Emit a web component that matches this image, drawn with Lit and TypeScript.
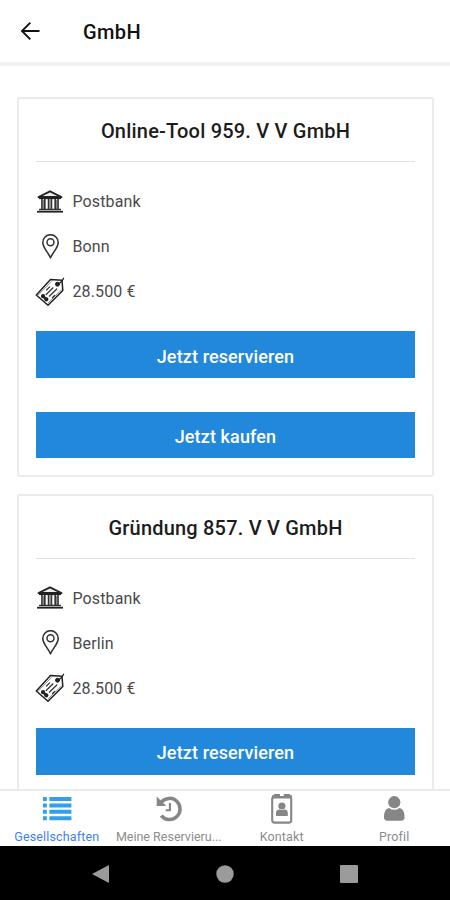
import { LitElement, html, css, svg, nothing } from "lit";
import { customElement, property } from "lit/decorators.js";

const bankIcon = svg`<svg width="28" height="24" viewBox="0 0 28 24">
  <path d="M2.500 7 14 1.300 25.500 7z" fill="#eee" stroke="#222" stroke-width="1.900" stroke-linejoin="round"/>
  <path d="M3 8.300h22" stroke="#222" stroke-width="1.600"/>
  <path d="M6 9v10.500M8.800 9v10.500M12.600 9v10.500M15.400 9v10.500M19.200 9v10.500M22 9v10.500" stroke="#333" stroke-width="1.700"/>
  <path d="M7.400 10v9M14 10v9M20.600 10v9" stroke="#888" stroke-width="1.200"/>
  <path d="M3 19.500h22" stroke="#333" stroke-width="1.500"/>
  <path d="M1 21.700h26" stroke="#222" stroke-width="1.800"/>
</svg>`;

const pinIcon = svg`<svg width="28" height="26" viewBox="0 0 28 26" fill="none" stroke="#333">
  <path d="M14.500 23.800C12.300 18.500 6.800 13.700 6.800 8.400a7.700 7.700 0 0 1 15.400 0c0 5.300-5.500 10.100-7.700 15.400z" stroke-width="1.600" stroke-linejoin="round"/>
  <circle cx="14.500" cy="8.200" r="3.500" stroke-width="1.500"/>
</svg>`;

const tagIcon = svg`<svg width="30" height="30" viewBox="0 0 30 30" fill="none" stroke="#222" stroke-linecap="round" stroke-linejoin="round">
  <path d="M15.500 2.500 27 3.200l.8 10.300L13 28.200 1.300 18z" stroke-width="1.500"/>
  <path d="M3.300 18 16.300 4.700M13 26l13.300-13" stroke="#777" stroke-width=".8"/>
  <path d="M23 6.800c2.500-.6 4.200-2.600 5.600-5.500" stroke-width="1.300"/>
  <circle cx="22.500" cy="7.200" r="2" fill="#222" stroke-width="1"/>
  <path d="m11.500 13 3.200-3.200M11.200 17.500l6.800-6.700M14.300 19.200l7.500-7.200M17.500 20.500l2.200-2.200" stroke="#333" stroke-width="1.200"/>
  <path d="M8 19.200h.1M11.300 22.300h.1" stroke-width="4.200"/>
  <path d="m8 19.200 3.300 3.100" stroke-width="2.500"/>
</svg>`;

const listIcon = svg`<svg width="30" height="24" viewBox="0 0 30 24" fill="#2f9fee">
  <path d="M1 0h3.800v4H1zM7.400 0h22v4h-22zM1 6.400h3.800v4H1zM7.400 6.400h22v4h-22zM1 12.800h3.800v4H1zM7.400 12.800h22v4h-22zM1 19.200h3.800v4H1zM7.400 19.200h22v4h-22z"/>
</svg>`;

const historyIcon = svg`<svg width="28" height="28" viewBox="0 0 28 28" fill="none" stroke="#868686">
  <path d="M6.300 7.200A10.600 10.600 0 1 1 6.200 20.600" stroke-width="3.500"/>
  <path d="M1.700 1.500V11H11.200z" fill="#868686" stroke="none"/>
  <path d="M14.900 8v7.300h-4.200" stroke-width="2.100"/>
</svg>`;

const badgeIcon = svg`<svg width="22" height="30" viewBox="0 0 22 30" fill="#868686">
  <rect x="1.200" y="3" width="19" height="25.600" rx="2" fill="none" stroke="#868686" stroke-width="2.100"/>
  <path d="M1 1.200h1.800V0H9v2.400h3.800V0h6.300v1.200H21v3.200H1z"/>
  <circle cx="10.900" cy="12" r="3.600"/>
  <path d="M5 22v-3.200c0-2.200 1.400-3.400 3.400-3.400a5 5 0 0 0 5 0c2 0 3.400 1.200 3.400 3.400V22z"/>
</svg>`;

const personIcon = svg`<svg width="24" height="28" viewBox="0 0 24 28" fill="#868686">
  <circle cx="12.300" cy="7.200" r="6.100"/>
  <path d="M2 22.500c0-5.200 1.300-8.800 5.200-9.600a8 8 0 0 0 10.200 0c3.900.8 5.200 4.400 5.200 9.600 0 2-1.300 3.200-3.200 3.200H5.200C3.300 25.700 2 24.500 2 22.500z"/>
</svg>`;

@customElement("company-card")
class CompanyCard extends LitElement {
  @property() name = "";
  @property() bank = "";
  @property() city = "";
  @property() price = "";
  @property({ type: Boolean }) buyable = false;

  static styles = css`
    :host {
      display: block;
      box-sizing: border-box;
      height: 380px;
      flex: none;
      padding: 0 17px;
      border: 2px solid #eaecec;
      border-radius: 3px;
      background: #fff;
    }
    h2 {
      margin: 0;
      height: 63px;
      line-height: 64px;
      box-sizing: border-box;
      border-bottom: 1px solid #e2e2e2;
      text-align: center;
      font-size: 20px;
      font-weight: 500;
      letter-spacing: 0.200px;
      color: #1c1c1c;
      white-space: nowrap;
    }
    .facts {
      padding-top: 17px;
      height: 152px;
    }
    .fact {
      display: flex;
      align-items: center;
      height: 45px;
      font-size: 16px;
      letter-spacing: 0.120px;
      color: #4a4a4a;
    }
    .icon {
      width: 36.500px;
      display: flex;
    }
    .icon.tag {
      margin-left: -1px;
      width: 37.500px;
    }
    button {
      display: block;
      width: 100%;
      height: 47px;
      margin: 0;
      padding: 3px 0 0;
      border: 0;
      background: #2188dc;
      color: #fff;
      font: 500 18px Roboto, sans-serif;
      letter-spacing: 0.120px;
    }
    button + button {
      margin-top: 34px;
      height: 46px;
    }
  `;

  render() {
    return html`
      <h2>${this.name}</h2>
      <div class="facts">
        <div class="fact"><span class="icon">${bankIcon}</span>${this.bank}</div>
        <div class="fact"><span class="icon">${pinIcon}</span>${this.city}</div>
        <div class="fact"><span class="icon tag">${tagIcon}</span>${this.price}</div>
      </div>
      <button>Jetzt reservieren</button>
      ${this.buyable ? html`<button>Jetzt kaufen</button>` : nothing}
    `;
  }
}

@customElement("app-root")
class AppRoot extends LitElement {
  static styles = css`
    :host {
      display: flex;
      flex-direction: column;
      width: 450px;
      height: 900px;
      overflow: hidden;
      background: #fff;
      font-family: Roboto, sans-serif;
    }
    header {
      flex: none;
      display: flex;
      align-items: center;
      height: 66px;
      box-sizing: border-box;
      padding: 0 0 0 20px;
      border-bottom: 4px solid #f1f1f1;
    }
    h1 {
      margin: 2px 0 0 43px;
      font-size: 20px;
      font-weight: 500;
      letter-spacing: 0.400px;
      color: #111;
    }
    main {
      flex: 1;
      min-height: 0;
      overflow: hidden;
      display: flex;
      flex-direction: column;
      gap: 16.500px;
      padding: 31px 16px 0 17px;
    }
    .tabs {
      flex: none;
      display: grid;
      grid-template-columns: repeat(4, 1fr);
      height: 57px;
      box-sizing: border-box;
      border-top: 2px solid #ebebeb;
      background: #fff;
    }
    .tab {
      display: flex;
      flex-direction: column;
      align-items: center;
      min-width: 0;
      padding-left: 1px;
      font-size: 12.500px;
      letter-spacing: 0.150px;
      color: #8c8c8c;
      white-space: nowrap;
    }
    .tab.long {
      padding-left: 0;
      letter-spacing: 0;
    }
    .tab.active {
      color: #3f7ff0;
    }
    .glyph {
      height: 36px;
      margin-bottom: 2px;
      display: flex;
      align-items: center;
    }
    .system {
      flex: none;
      height: 54px;
      background: #000;
      display: flex;
      align-items: center;
      justify-content: space-between;
      padding: 1px 91px 0;
      box-sizing: border-box;
    }
  `;

  render() {
    return html`
      <header>
        <svg width="20" height="20" viewBox="0 0 20 20" fill="none" stroke="#111" stroke-width="1.900">
          <path d="M19.500 10H2.500M10.300 1.700 2 10l8.300 8.300" />
        </svg>
        <h1>GmbH</h1>
      </header>
      <main>
        <company-card name="Online-Tool 959. V V GmbH" bank="Postbank" city="Bonn" price="28.500 €" buyable></company-card>
        <company-card name="Gründung 857. V V GmbH" bank="Postbank" city="Berlin" price="28.500 €"></company-card>
      </main>
      <nav class="tabs">
        <div class="tab active"><span class="glyph">${listIcon}</span>Gesellschaften</div>
        <div class="tab long"><span class="glyph">${historyIcon}</span>Meine Reservieru...</div>
        <div class="tab"><span class="glyph">${badgeIcon}</span>Kontakt</div>
        <div class="tab"><span class="glyph">${personIcon}</span>Profil</div>
      </nav>
      <div class="system">
        <svg width="20" height="20" viewBox="0 0 20 20"><path d="M18 1v18L1 10z" fill="#9b9b9b" /></svg>
        <svg width="20" height="20" viewBox="0 0 20 20"><circle cx="10" cy="10" r="8.700" fill="#9b9b9b" /></svg>
        <svg width="20" height="20" viewBox="0 0 20 20"><rect x="1" y="1" width="18" height="18" rx="1" fill="#9b9b9b" /></svg>
      </div>
    `;
  }
}
